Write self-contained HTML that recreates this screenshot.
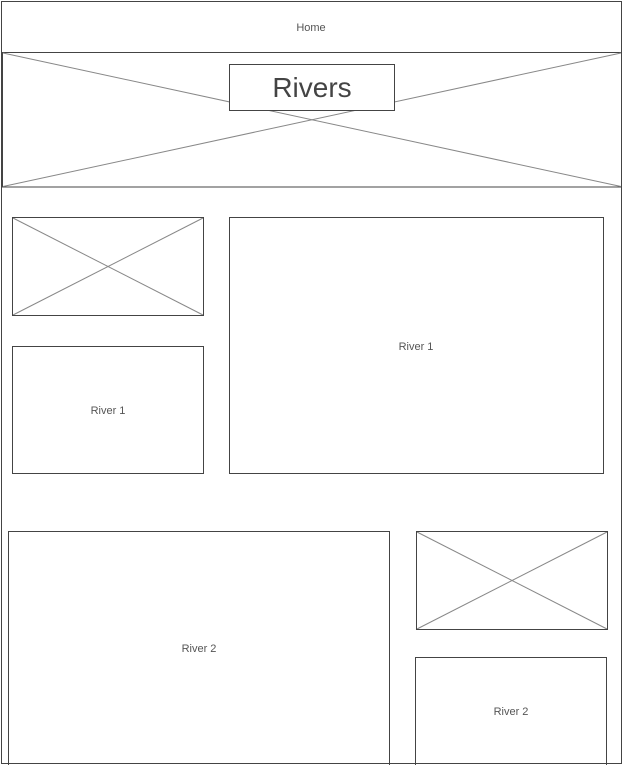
<!DOCTYPE html>
<html><head><meta charset="utf-8"><style>
html,body{margin:0;padding:0;background:#fff;}
svg{display:block;}
text{font-family:"Liberation Sans",Arial,sans-serif;fill:#555;}
</style></head><body>
<svg width="624" height="765" viewBox="0 0 624 765" xmlns="http://www.w3.org/2000/svg">
<g fill="none" stroke="#444" stroke-width="1">
<rect x="1.5" y="1.5" width="620" height="762"/>
<line x1="1.5" y1="52.5" x2="621.5" y2="52.5"/>
<rect x="2.5" y="52.5" width="619" height="134.5"/>
</g>
<g stroke="#888" stroke-width="1">
<line x1="3" y1="53" x2="621" y2="186.5"/>
<line x1="3" y1="186.5" x2="621" y2="53"/>
<line x1="13" y1="218" x2="203" y2="315"/>
<line x1="13" y1="315" x2="203" y2="218"/>
<line x1="417" y1="532" x2="607" y2="629"/>
<line x1="417" y1="629" x2="607" y2="532"/>
</g>
<rect x="229.5" y="64.5" width="165" height="46" fill="#fff" stroke="#444"/>
<g fill="none" stroke="#444">
<rect x="12.5" y="217.5" width="191" height="98"/>
<rect x="12.5" y="346.5" width="191" height="127"/>
<rect x="229.5" y="217.5" width="374" height="256"/>
<rect x="8.5" y="531.5" width="381" height="240"/>
<rect x="416.5" y="531.5" width="191" height="98"/>
<rect x="415.5" y="657.5" width="191" height="120"/>
</g>
<line x1="1.5" y1="763.5" x2="621.5" y2="763.5" stroke="#444"/>
<text x="311" y="31" font-size="11" text-anchor="middle">Home</text>
<text x="312" y="97" font-size="28" text-anchor="middle" style="fill:#444">Rivers</text>
<text x="108" y="414" font-size="11" text-anchor="middle">River 1</text>
<text x="416" y="350" font-size="11" text-anchor="middle">River 1</text>
<text x="199" y="652" font-size="11" text-anchor="middle">River 2</text>
<text x="511" y="715" font-size="11" text-anchor="middle">River 2</text>
</svg>
</body></html>
